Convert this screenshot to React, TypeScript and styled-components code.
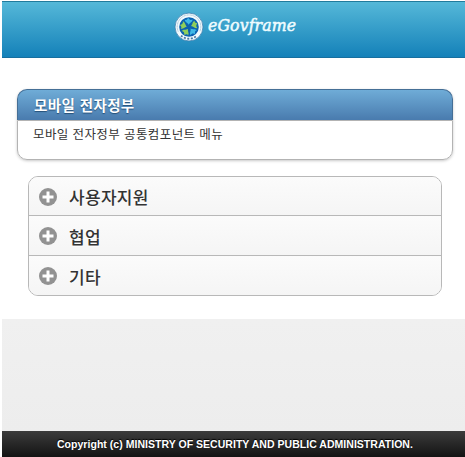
import React from 'react';
import styled, { createGlobalStyle } from 'styled-components';

const GlobalStyle = createGlobalStyle`
  * { box-sizing: border-box; }
  body { margin: 0; background: #fff; overflow: hidden; }
`;

const Page = styled.div`
  display: flex;
  flex-direction: column;
  height: 457px;
  padding: 1px 0 0 2px;
  font-family: 'Liberation Sans', 'Noto Sans CJK KR', sans-serif;
  color: #333;
`;

const Header = styled.header`
  flex: none;
  display: flex;
  align-items: flex-start;
  height: 57px;
  padding: 10px 0 0 172px;
  border-top: 1px solid #217b9c;
  border-bottom: 1px solid #176f9f;
  background: linear-gradient(#55b8d8, #1481b9);
`;

const Emblem = styled.svg`
  flex: none;
  width: 30px;
  height: 30px;
`;

const Brand = styled.span`
  margin: 1px 0 0 4px;
  font: italic 17.5px/24px 'DejaVu Serif Condensed', 'DejaVu Serif', serif;
  font-stretch: condensed;
  letter-spacing: 0.1px;
  white-space: nowrap;
  color: #effcff;
  -webkit-text-stroke: 0.5px #effcff;
`;

const Content = styled.main`
  flex: none;
  height: 261px;
  padding: 31px 12px 0 15px;
`;

const Card = styled.section`
  height: 71px;
  border-radius: 10px;
  box-shadow: 0 1px 3px rgba(0, 0, 0, 0.22);
`;

const CardTitle = styled.h1`
  height: 31px;
  margin: 0;
  padding-left: 16px;
  border: 1px solid #456f96;
  border-bottom: 0;
  border-radius: 10px 10px 0 0;
  background: linear-gradient(#6facd7, #497bae);
  color: #fff;
  font-size: 14.5px;
  line-height: 33px;
  letter-spacing: 0.4px;
  text-shadow: 0 1px 1px #254f77;
`;

const CardBody = styled.p`
  height: 40px;
  margin: 0;
  padding: 5px 0 0 15px;
  border: 1px solid #b3b3b3;
  border-radius: 0 0 10px 10px;
  background: #fff;
  font-size: 12.5px;
  line-height: 18px;
  letter-spacing: 0.4px;
`;

const Menu = styled.ul`
  margin: 16px 11px 0;
  padding: 0;
  overflow: hidden;
  list-style: none;
  border: 1px solid #b8b8b8;
  border-radius: 10px;
`;

const MenuItem = styled.li`
  display: flex;
  align-items: center;
  height: 40px;
  padding: 0 0 0 10px;
  background: linear-gradient(#fbfbfb, #f5f5f5);
  font-size: 17px;
  font-weight: 500;
  &:first-child { height: 38px; padding-top: 1px; }
  & + & { border-top: 1px solid #b8b8b8; }
`;

const PlusIcon = styled.svg`
  flex: none;
  width: 18px;
  height: 18px;
  margin-right: 12px;
`;

const MenuLabel = styled.span`
  padding-top: 7px;
  line-height: 24px;
  letter-spacing: 0.3px;
  text-shadow: 0 1px 0 #fff;
  ${MenuItem}:first-child & { padding-top: 5px; }
`;

const Filler = styled.div`
  flex: 1;
  background: linear-gradient(#f0f0f0, #ededed);
`;

const Footer = styled.footer`
  flex: none;
  height: 26px;
  padding-left: 55px;
  background: linear-gradient(#3c3c3c, #131313);
  color: #fff;
  font-size: 10.5px;
  font-weight: 700;
  line-height: 27px;
  letter-spacing: 0.03px;
  white-space: nowrap;
  text-shadow: 0 -1px 1px #000;
`;

const petals = [0, 72, 144, 216, 288];
const menu = ['사용자지원', '협업', '기타'];

function GovernmentEmblem() {
  return (
    <Emblem viewBox="0 0 30 30">
      <circle cx="15" cy="15" r="14" fill="#f2fafd" stroke="#3c7fae" strokeWidth=".8" />
      <path d="M4.2 19.5A11.8 11.8 0 1 1 25.8 19.5" fill="none" stroke="#9dbdd2" strokeWidth="1" strokeDasharray="1 .5" />
      <path d="M7 23.6A11.8 11.8 0 0 0 23 23.6" fill="none" stroke="#4a7ba3" strokeWidth="1.8" strokeDasharray="2 1.5" />
      <circle cx="15" cy="15" r="9.8" fill="#0b62b0" />
      {petals.map((angle, i) => (
        <path
          key={angle}
          d="M14.6 12.8 C13.4 10.2 10.9 10.4 10.8 7.6 C12.3 8.7 13.3 7.5 14.1 5.8 C15.2 7.6 16.5 8.5 18.6 7.4 C18.2 10.2 16.1 10.2 14.6 12.8Z"
          fill={i === 1 || i === 3 || i === 4 ? '#8fce5a' : '#3fb9e6'}
          transform={`rotate(${angle} 15 15)`}
        />
      ))}
    </Emblem>
  );
}

function Plus() {
  return (
    <PlusIcon viewBox="0 0 18 18">
      <circle cx="9" cy="9" r="9" fill="#929292" />
      <path d="M9 3.5v11M3.5 9h11" stroke="#fff" strokeWidth="3" />
    </PlusIcon>
  );
}

export default function App() {
  return (
    <>
      <GlobalStyle />
      <Page>
        <Header>
          <GovernmentEmblem />
          <Brand>eGovframe</Brand>
        </Header>
        <Content>
          <Card>
            <CardTitle>모바일 전자정부</CardTitle>
            <CardBody>모바일 전자정부 공통컴포넌트 메뉴</CardBody>
          </Card>
          <Menu>
            {menu.map((label) => (
              <MenuItem key={label}>
                <Plus />
                <MenuLabel>{label}</MenuLabel>
              </MenuItem>
            ))}
          </Menu>
        </Content>
        <Filler />
        <Footer>Copyright (c) MINISTRY OF SECURITY AND PUBLIC ADMINISTRATION.</Footer>
      </Page>
    </>
  );
}
